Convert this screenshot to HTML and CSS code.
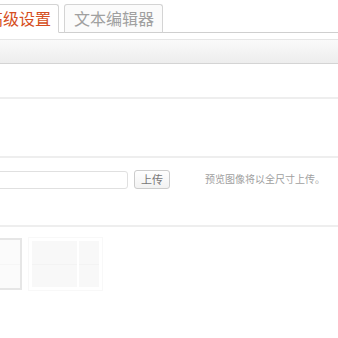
FILE: index.html
```html
<!DOCTYPE html>
<html>
<head>
<meta charset="utf-8">
<link rel="stylesheet" href="styles.css">
</head>
<body>
<div class="page">
  <div class="tabs">
    <div class="tab active">高级设置</div>
    <div class="tab">文本编辑器</div>
  </div>
  <div class="bar"></div>
  <div class="row r1"></div>
  <div class="row r2"></div>
  <div class="row r3">
    <div class="input"></div>
    <div class="btn">上传</div>
    <div class="help">预览图像将以全尺寸上传。</div>
  </div>
  <div class="row r4">
    <div class="thumb"></div>
    <div class="preview">
      <div class="panel big"></div>
      <div class="panel small"></div>
    </div>
  </div>
</div>
</body>
</html>
```
FILE: styles.css
```css
html, body {
  margin: 0;
  padding: 0;
  background: #fff;
  overflow: hidden;
}
body {
  font-family: "Noto Sans CJK SC", "Liberation Sans", sans-serif;
}
.page {
  width: 338px;
  height: 338px;
  overflow: hidden;
}
.tabs {
  display: flex;
  align-items: flex-end;
  height: 28px;
  padding-top: 4px;
  border-bottom: 1px solid #cfcfcf;
  margin-left: -20px;
  gap: 5px;
}
.tab {
  box-sizing: border-box;
  height: 29px;
  margin-bottom: -1px;
  border: 1px solid #d4d4d4;
  border-radius: 3px 3px 0 0;
  font-size: 16px;
  line-height: 27px;
  color: #a0a0a0;
  padding: 0 8px 0 9px;
  background: #fbfbfb;
  border-bottom: 1px solid #cfcfcf;
}
.tab.active {
  color: #d54e21;
  background: #fff;
  border-bottom-color: #fff;
  padding: 0 7px 0 6px;
}
.bar {
  margin-top: 6px;
  height: 23px;
  border-top: 1px solid #e6e6e6;
  border-bottom: 1px solid #d4d4d4;
  background: linear-gradient(#fafafa, #ededed);
}
.row {
  border-bottom: 2px solid #eeeeee;
}
.r1 { height: 33px; }
.r2 { height: 57px; }
.r3 {
  height: 67px;
  display: flex;
  align-items: flex-start;
}
.input {
  box-sizing: border-box;
  margin-top: 13px;
  margin-left: -10px;
  width: 138px;
  height: 18px;
  border: 1px solid #e0e0e0;
  border-radius: 3px;
  background: #fff;
}
.btn {
  box-sizing: border-box;
  margin-top: 12px;
  margin-left: 6px;
  width: 36px;
  height: 19px;
  border: 1px solid #cccccc;
  border-radius: 3px;
  background: linear-gradient(#fefefe, #f2f2f2);
  font-size: 11px;
  line-height: 17px;
  text-align: center;
  color: #777;
}
.help {
  margin-top: 13px;
  margin-left: 35px;
  font-size: 10px;
  line-height: 16px;
  color: #a0a0a0;
}
.r4 {
  border-bottom: none;
  display: flex;
  align-items: flex-start;
  padding-top: 10px;
}
.thumb {
  box-sizing: border-box;
  margin-left: -30px;
  margin-top: 1px;
  width: 52px;
  height: 52px;
  border: 2px solid #e6e6e6;
  background: linear-gradient(#fbfbfb 50%, #f6f6f6 50%, #f6f6f6 calc(50% + 1px), #fbfbfb calc(50% + 1px));
}
.preview {
  box-sizing: border-box;
  margin-left: 6px;
  display: flex;
  gap: 2px;
  padding: 3px;
  width: 75px;
  height: 54px;
  border: 1px solid #f8f8f8;
}
.panel {
  height: 46px;
  background: linear-gradient(#f8f8f8 50%, #f3f3f3 50%, #f3f3f3 calc(50% + 1px), #f8f8f8 calc(50% + 1px));
}
.panel.big { width: 46px; }
.panel.small { width: 21px; }
```
